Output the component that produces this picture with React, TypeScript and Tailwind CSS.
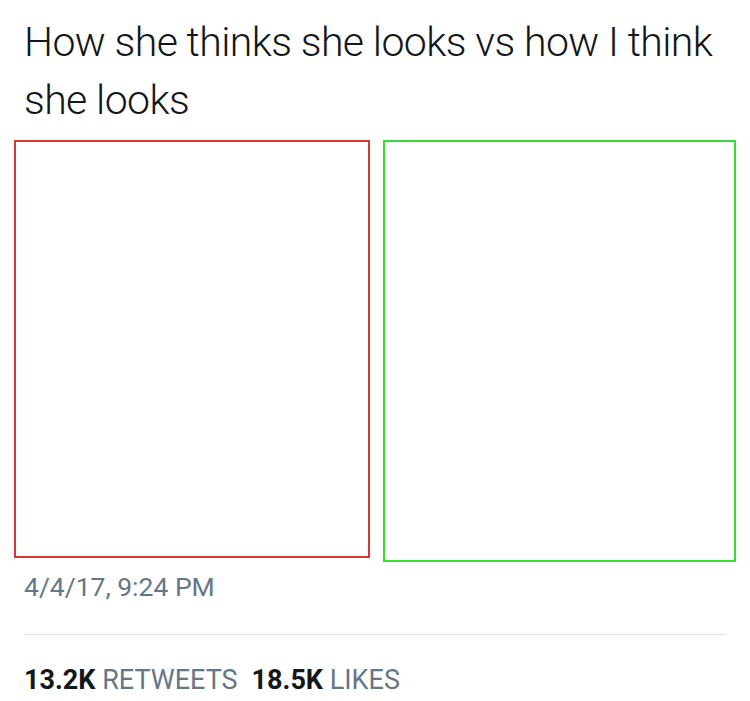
export default function App() {
  return (
    <div className="w-[750px] h-[701px] bg-white overflow-hidden" style={{ fontFamily: 'Roboto, "Liberation Sans", sans-serif' }}>
      <p className="pl-[24px] pr-4 pt-[13px] text-[41px] leading-[58px] font-light text-[#14171a] tracking-[-0.6px]">
        How she thinks she looks vs how I think she looks
      </p>
      <div className="flex items-start pl-[14px] pt-[11px]">
        <div className="w-[356px] h-[418px] border-2 border-[#dd3333]" />
        <div className="ml-[13px] w-[353px] h-[422px] border-2 border-[#33dd33]" />
      </div>
      <div className="pl-[24px] mt-[9px] text-[26.5px] leading-[32px] text-[#657786]">4/4/17, 9:24 PM</div>
      <div className="ml-[24px] mr-[24px] mt-[31px] h-[1px] bg-[#dfe3e6]" />
      <div className="pl-[24px] mt-[29px] text-[27px] leading-[32px] text-[#657786] flex gap-[14px]">
        <span>
          <span className="font-bold text-[#14171a]">13.2K</span> RETWEETS
        </span>
        <span>
          <span className="font-bold text-[#14171a]">18.5K</span> LIKES
        </span>
      </div>
    </div>
  );
}
